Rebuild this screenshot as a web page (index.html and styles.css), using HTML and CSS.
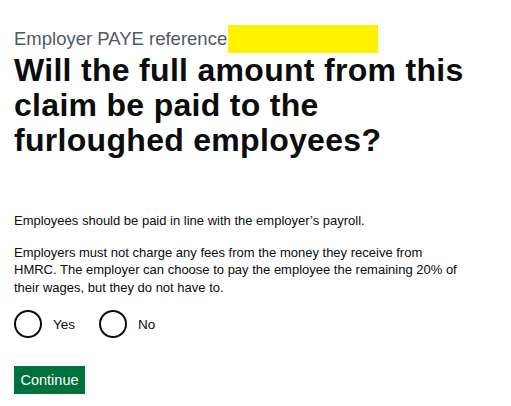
FILE: index.html
```html
<!DOCTYPE html>
<html lang="en">
<head>
<meta charset="utf-8">
<title>Furlough claim</title>
<link rel="stylesheet" href="styles.css">
</head>
<body>
<main class="page">
  <div class="caption">Employer PAYE reference:<span class="redact"></span></div>
  <h1 class="heading">Will the full amount from this claim be paid to the furloughed employees?</h1>
  <p class="body first">Employees should be paid in line with the employer’s payroll.</p>
  <p class="body">Employers must not charge any fees from the money they receive from HMRC. The employer can choose to pay the employee the remaining 20% of their wages, but they do not have to.</p>
  <div class="radios">
    <label class="radio"><span class="circle"></span><span class="radio-label">Yes</span></label>
    <label class="radio"><span class="circle"></span><span class="radio-label">No</span></label>
  </div>
  <button class="button">Continue</button>
</main>
</body>
</html>
```

FILE: styles.css
```css
html, body {
  margin: 0;
  padding: 0;
  background: #ffffff;
}
.page {
  padding: 25px 14px 0 14px;
  font-family: "Liberation Sans", Arial, sans-serif;
  color: #0b0c0c;
  width: 470px;
}
.caption {
  font-size: 18.5px;
  color: #505a5f;
  height: 28px;
  line-height: 28px;
  display: flex;
  align-items: flex-end;
}
.redact {
  display: inline-block;
  width: 150px;
  height: 28px;
  background: #fff200;
  margin-left: -4px;
}
.heading {
  margin: 0;
  font-size: 32px;
  line-height: 35px;
  font-weight: 700;
  letter-spacing: 0.3px;
  max-width: 460px;
}
.body {
  margin: 0;
  font-size: 13px;
  line-height: 17.5px;
  max-width: 446px;
}
.first {
  margin-top: 54px;
  margin-bottom: 14px;
}
.radios {
  display: flex;
  margin-top: 14px;
}
.radio {
  display: flex;
  align-items: center;
  margin-right: 24px;
}
.circle {
  width: 24px;
  height: 24px;
  border: 2px solid #0b0c0c;
  border-radius: 50%;
}
.radio-label {
  font-size: 13.5px;
  margin-left: 11px;
}
.button {
  margin-top: 28px;
  display: block;
  background: #00703c;
  color: #ffffff;
  border: 0;
  box-shadow: 0 2px 0 #002d18;
  font-family: "Liberation Sans", Arial, sans-serif;
  font-size: 14.5px;
  width: 71px;
  height: 28px;
  padding: 0;
}
```
